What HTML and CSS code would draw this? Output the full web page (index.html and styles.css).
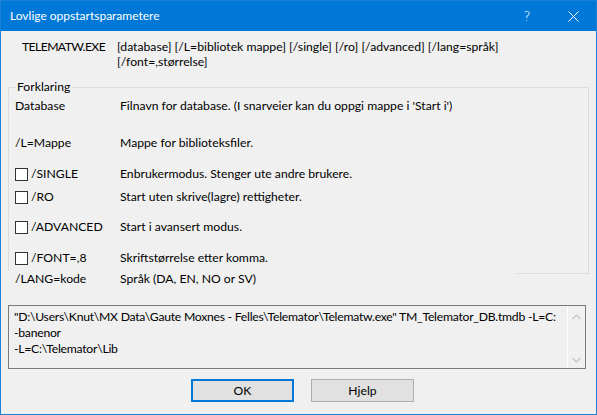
FILE: index.html
```html
<!DOCTYPE html>
<html lang="no">
<head>
<meta charset="utf-8">
<title>Lovlige oppstartsparametere</title>
<link rel="stylesheet" href="styles.css">
</head>
<body>
<div class="window">
  <div class="titlebar">
    <span class="title">Lovlige oppstartsparametere</span>
    <span class="tbtns">
      <span class="tbtn help">?</span>
      <span class="tbtn close"><svg width="11" height="11" viewBox="0 0 11 11"><path d="M0.5 0.5 L10.5 10.5 M10.5 0.5 L0.5 10.5" stroke="#fff" stroke-width="1" fill="none"/></svg></span>
    </span>
  </div>
  <div class="syntax">
    <div class="exe">TELEMATW.EXE</div>
    <div class="args">[database] [/L=bibliotek mappe] [/single] [/ro] [/advanced] [/lang=språk]<br>[/font=,størrelse]</div>
  </div>
  <fieldset class="group">
    <legend>Forklaring</legend>
    <div class="rows">
      <div class="lbl">Database</div><div class="desc">Filnavn for database. (I snarveier kan du oppgi mappe i 'Start i')</div>
      <div class="lbl">/L=Mappe</div><div class="desc">Mappe for biblioteksfiler.</div>
      <div class="lbl chk"><span class="box"></span>/SINGLE</div><div class="desc">Enbrukermodus. Stenger ute andre brukere.</div>
      <div class="lbl chk"><span class="box"></span>/RO</div><div class="desc">Start uten skrive(lagre) rettigheter.</div>
      <div class="lbl chk"><span class="box"></span>/ADVANCED</div><div class="desc">Start i avansert modus.</div>
      <div class="lbl chk"><span class="box"></span>/FONT=,8</div><div class="desc">Skriftstørrelse etter komma.</div>
    </div>
  </fieldset>
  <div class="lang">
    <div class="lbl">/LANG=kode</div><div class="desc">Språk (DA, EN, NO or SV)</div>
  </div>
  <div class="memo">
    <div class="memo-text">"D:\Users\Knut\MX Data\Gaute Moxnes - Felles\Telemator\Telematw.exe" TM_Telemator_DB.tmdb -L=C:
-banenor
-L=C:\Telemator\Lib</div>
    <div class="scroll">
      <span class="arrow up"><svg width="9" height="6" viewBox="0 0 9 6"><path d="M0.5 5 L4.5 1 L8.5 5" stroke="#c2c2c2" stroke-width="1.2" fill="none"/></svg></span>
      <span class="arrow down"><svg width="9" height="6" viewBox="0 0 9 6"><path d="M0.5 1 L4.5 5 L8.5 1" stroke="#c2c2c2" stroke-width="1.2" fill="none"/></svg></span>
    </div>
  </div>
  <div class="buttons">
    <button class="btn default">OK</button>
    <button class="btn">Hjelp</button>
  </div>
</div>
</body>
</html>
```
FILE: styles.css
```css
html, body {
  margin: 0;
  padding: 0;
  background: #f0f0f0;
}
body {
  font-family: Lato, "Noto Sans", sans-serif;
  font-size: 12.2px;
  color: #000;
}
.window {
  width: 597px;
  height: 415px;
  box-sizing: border-box;
  border: 1px solid #1a80d8;
  background: #f0f0f0;
  overflow: hidden;
}
.titlebar {
  height: 30px;
  background: #0078d7;
  color: #fff;
  display: flex;
  align-items: center;
  justify-content: space-between;
  padding-left: 9px;
}
.title {
  font-size: 12px;
  line-height: 16px;
}
.tbtns {
  display: flex;
}
.tbtn {
  width: 46px;
  height: 30px;
  display: flex;
  align-items: center;
  justify-content: center;
}
.help {
  font-size: 14px;
  font-weight: 300;
  font-family: "DejaVu Sans", sans-serif;
}
.syntax {
  display: flex;
  margin: 8px 0 0 21px;
  line-height: 15px;
}
.exe {
  width: 95px;
  flex: none;
  letter-spacing: -0.6px;
}
.group {
  margin: 10px 0 0 7px;
  width: 581px;
  box-sizing: border-box;
  border: 1px solid #dcdcdc;
  padding: 3px 6px 7px 6px;
  min-inline-size: 0;
}
.group legend {
  padding: 0 2px;
  line-height: 16px;
}
.rows {
  display: grid;
  grid-template-columns: 105px 1fr;
  grid-template-rows: 37px 31px 23px 30px 31px 16px;
  align-items: start;
  line-height: 16px;
}
.chk {
  display: flex;
  align-items: center;
  gap: 3px;
}
.box {
  width: 13px;
  height: 13px;
  box-sizing: border-box;
  border: 1px solid #333;
  background: #fff;
  flex: none;
}
.lang {
  display: grid;
  grid-template-columns: 105px 1fr;
  margin: -3px 0 0 7px;
  width: 508px;
  box-sizing: border-box;
  padding-left: 7px;
  line-height: 16px;
  background: #f0f0f0;
}
.memo {
  margin: 18px 0 0 7px;
  width: 578px;
  height: 64px;
  box-sizing: border-box;
  border: 1px solid #7a7a7a;
  display: flex;
}
.memo-text {
  flex: 1;
  padding: 3px 5px;
  line-height: 16px;
  white-space: pre;
  overflow: hidden;
  letter-spacing: -0.25px;
}
.scroll {
  width: 18px;
  box-sizing: border-box;
  border-left: 1px solid #fff;
  display: flex;
  flex-direction: column;
  justify-content: space-between;
  padding: 2px 0 0 0;
}
.arrow {
  height: 17px;
  display: flex;
  align-items: center;
  justify-content: center;
}
.buttons {
  display: flex;
  gap: 17px;
  margin-top: 10px;
  padding-left: 190px;
}
.btn {
  width: 103px;
  height: 23px;
  box-sizing: border-box;
  background: #e1e1e1;
  border: 1px solid #adadad;
  font-family: inherit;
  font-size: 12.2px;
  color: #000;
  padding: 0;
  margin: 0;
}
.btn.default {
  border: 2px solid #0078d7;
}
```
